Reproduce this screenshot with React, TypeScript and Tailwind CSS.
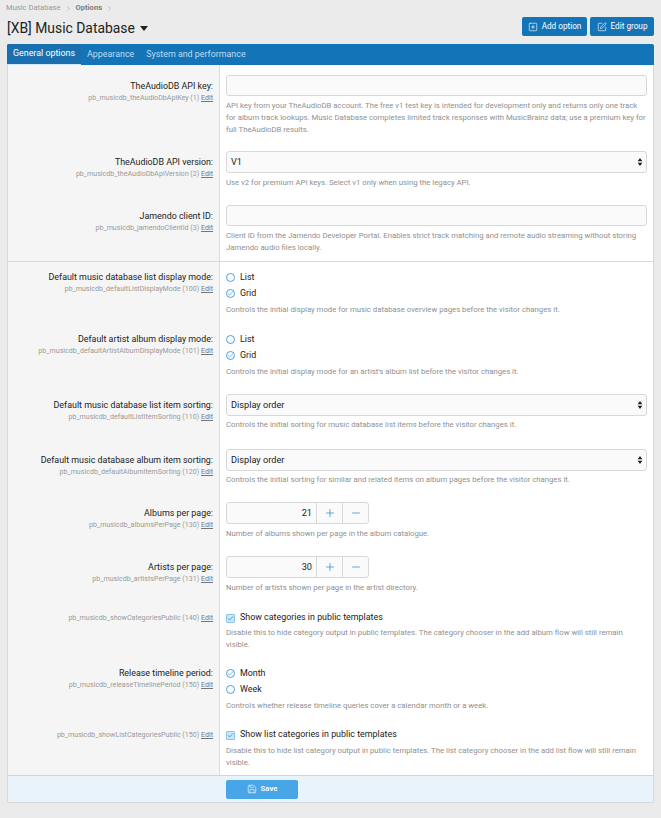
import type { ReactNode } from "react";
import { ChevronRight, Minus, Plus, SquarePen, SquarePlus, Save, Check } from "lucide-react";

const font = { fontFamily: 'Roboto, "Open Sans", sans-serif' };

function Row({ label, id, className = "", labelClass = "mt-[5px]", children }: { label?: string; id: string; className?: string; labelClass?: string; children: ReactNode }) {
  return (
    <div className="flex">
      <div className={`w-[212px] shrink-0 border-r border-[#dcdcdc] bg-[#f5f5f5] pr-[6px] text-right ${className}`}>
        <div className={labelClass}>
          {label && <div className="text-[8.9px] leading-[12px] text-[#222]">{label}</div>}
          <div className="text-[7.1px] leading-[12px] text-[#9a9a9a]">
            {id} <span className="text-[#777] underline">Edit</span>
          </div>
        </div>
      </div>
      <div className={`min-w-0 flex-1 bg-white pl-[6px] pr-[6px] ${className}`}>{children}</div>
    </div>
  );
}

function Help({ children, className = "mt-[4px]" }: { children: ReactNode; className?: string }) {
  return <p className={`text-[7.75px] leading-[12px] text-[#909090] ${className}`}>{children}</p>;
}

function TextBox() {
  return <div className="h-[21px] rounded-[3px] border border-[#d8d8d8] bg-[#fafafa]" />;
}

function SelectBox({ value }: { value: string }) {
  return (
    <div className="flex h-[22px] items-center justify-between rounded-[3px] border border-[#d8d8d8] bg-[#fafafa] pl-[4px] pr-[3px] text-[9.2px] text-[#222]">
      <span>{value}</span>
      <svg width="6" height="10" viewBox="0 0 6 10" fill="#222">
        <path d="M3 1 5.4 4.2H.6zM3 9 .6 5.8h4.8z" />
      </svg>
    </div>
  );
}

function Radio({ label, checked }: { label: string; checked?: boolean }) {
  return (
    <div className="flex h-[16.5px] items-center text-[8.9px] text-[#222]">
      <span className="mr-[5px] flex h-[9px] w-[9px] items-center justify-center rounded-full border border-[#4a9fdc] bg-white text-[#4a9fdc]">
        {checked && <Check size={7} strokeWidth={2.5} />}
      </span>
      {label}
    </div>
  );
}

function CheckRow({ label }: { label: string }) {
  return (
    <div className="flex h-[14px] items-center text-[8.9px] text-[#222]">
      <span className="mr-[5px] flex h-[9px] w-[9px] items-center justify-center rounded-[1px] border border-[#8cc4ea] bg-[#cfe6f7] text-[#2f8fd6]">
        <Check size={7} strokeWidth={3} />
      </span>
      {label}
    </div>
  );
}

function Stepper({ value }: { value: string }) {
  return (
    <div className="flex h-[22px] w-[143px] rounded-[3px] border border-[#d8d8d8] bg-[#fafafa] text-[#222]">
      <div className="flex flex-1 items-center justify-end pr-[4px] text-[9.2px]">{value}</div>
      <div className="flex w-[26px] items-center justify-center border-l border-[#d8d8d8] text-[#2f8fd6]">
        <Plus size={12} strokeWidth={1.5} />
      </div>
      <div className="flex w-[26px] items-center justify-center border-l border-[#d8d8d8] text-[#2f8fd6]">
        <Minus size={12} strokeWidth={1.5} />
      </div>
    </div>
  );
}

export default function App() {
  return (
    <div className="h-[818px] overflow-hidden bg-[#ebebeb] px-[7px] pt-[4px]" style={font}>
      <div className="-ml-[1px] flex h-[8px] items-center text-[7.6px] text-[#999]">
        Music Database
        <ChevronRight size={7} className="mx-[4px]" />
        <strong className="text-[#7d7d7d]">Options</strong>
        <ChevronRight size={7} className="mx-[4px]" />
      </div>
      <div className="mt-[4px] flex h-[28px] items-start justify-between">
        <div className="flex h-[24px] items-center text-[13.9px] text-[#222]">
          [XB] Music Database
          <span className="ml-[5px] h-0 w-0 border-x-[4.5px] border-t-[5px] border-x-transparent border-t-[#222]" />
        </div>
        <div className="mt-[1px] flex gap-[3px]">
          <div className="flex h-[19px] w-[65px] items-center justify-center gap-[4px] rounded-[2px] bg-[#1474b8] text-[8.2px] text-white">
            <SquarePlus size={10} strokeWidth={1.5} /> Add option
          </div>
          <div className="flex h-[19px] w-[64px] items-center justify-center gap-[4px] rounded-[2px] bg-[#1474b8] text-[8.2px] text-white">
            <SquarePen size={10} strokeWidth={1.5} /> Edit group
          </div>
        </div>
      </div>
      <div className="overflow-hidden rounded-[2px]">
        <div className="flex h-[21px] items-stretch bg-[#1474b8] text-[8.9px]">
          <div className="flex items-center border-b border-[#cfe6f7] bg-[#1a6faf] px-[6px] text-white">General options</div>
          <div className="flex items-center px-[6px] text-[#bcdcf3]">Appearance</div>
          <div className="flex items-center px-[6px] text-[#bcdcf3]">System and performance</div>
        </div>

        <div className="border-x border-b border-[#d8d8d8]">
          <Row label="TheAudioDB API key:" id="pb_musicdb_theAudioDbApiKey (1)" className="pt-[10px]">
            <TextBox />
            <Help>
              API key from your TheAudioDB account. The free v1 test key is intended for development only and returns only one track
              for album track lookups. Music Database completes limited track responses with MusicBrainz data; use a premium key for
              full TheAudioDB results.
            </Help>
          </Row>
          <Row label="TheAudioDB API version:" id="pb_musicdb_theAudioDbApiVersion (2)" className="pt-[15px]">
            <SelectBox value="V1" />
            <Help>Use v2 for premium API keys. Select v1 only when using the legacy API.</Help>
          </Row>
          <Row label="Jamendo client ID:" id="pb_musicdb_jamendoClientId (3)" className="pt-[16px] pb-[7px]">
            <TextBox />
            <Help>
              Client ID from the Jamendo Developer Portal. Enables strict track matching and remote audio streaming without storing
              Jamendo audio files locally.
            </Help>
          </Row>
          <div className="h-px bg-[#d8d8d8]" />
          <Row label="Default music database list display mode:" id="pb_musicdb_defaultListDisplayMode (100)" className="pt-[7px]" labelClass="mt-[2px]">
            <Radio label="List" />
            <Radio label="Grid" checked />
            <Help className="mt-[2px]">Controls the initial display mode for music database overview pages before the visitor changes it.</Help>
          </Row>
          <Row label="Default artist album display mode:" id="pb_musicdb_defaultArtistAlbumDisplayMode (101)" className="pt-[15px]" labelClass="mt-[2px]">
            <Radio label="List" />
            <Radio label="Grid" checked />
            <Help className="mt-[2px]">Controls the initial display mode for an artist's album list before the visitor changes it.</Help>
          </Row>
          <Row label="Default music database list item sorting:" id="pb_musicdb_defaultListItemSorting (110)" className="pt-[16px]">
            <SelectBox value="Display order" />
            <Help className="mt-[3px]">Controls the initial sorting for music database list items before the visitor changes it.</Help>
          </Row>
          <Row label="Default music database album item sorting:" id="pb_musicdb_defaultAlbumItemSorting (120)" className="pt-[18px]">
            <SelectBox value="Display order" />
            <Help className="mt-[3px]">Controls the initial sorting for similar and related items on album pages before the visitor changes it.</Help>
          </Row>
          <Row label="Albums per page:" id="pb_musicdb_albumsPerPage (130)" className="pt-[16px]">
            <Stepper value="21" />
            <Help>Number of albums shown per page in the album catalogue.</Help>
          </Row>
          <Row label="Artists per page:" id="pb_musicdb_artistsPerPage (131)" className="pt-[16px]">
            <Stepper value="30" />
            <Help>Number of artists shown per page in the artist directory.</Help>
          </Row>
          <Row id="pb_musicdb_showCategoriesPublic (140)" className="pt-[17px]" labelClass="mt-[1px]">
            <CheckRow label="Show categories in public templates" />
            <Help className="mt-[2px]">Disable this to hide category output in public templates. The category chooser in the add album flow will still remain visible.</Help>
          </Row>
          <Row label="Release timeline period:" id="pb_musicdb_releaseTimelinePeriod (150)" className="pt-[14px]" labelClass="mt-[2px]">
            <Radio label="Month" checked />
            <Radio label="Week" />
            <Help className="mt-[2px]">Controls whether release timeline queries cover a calendar month or a week.</Help>
          </Row>
          <Row id="pb_musicdb_showListCategoriesPublic (150)" className="pt-[16px] pb-[6px]" labelClass="mt-[1px]">
            <CheckRow label="Show list categories in public templates" />
            <Help className="mt-[3px]">Disable this to hide list category output in public templates. The list category chooser in the add list flow will still remain visible.</Help>
          </Row>
          <div className="flex h-[27px] items-center border-t border-[#d4d4d4] bg-[#e8f3fb] pl-[218px]">
            <div className="flex h-[19px] w-[72px] items-center justify-center gap-[4px] rounded-[2px] bg-[#47a5e8] text-[7.8px] font-semibold text-white">
              <Save size={10} strokeWidth={1.5} /> Save
            </div>
          </div>
        </div>
      </div>
    </div>
  );
}
